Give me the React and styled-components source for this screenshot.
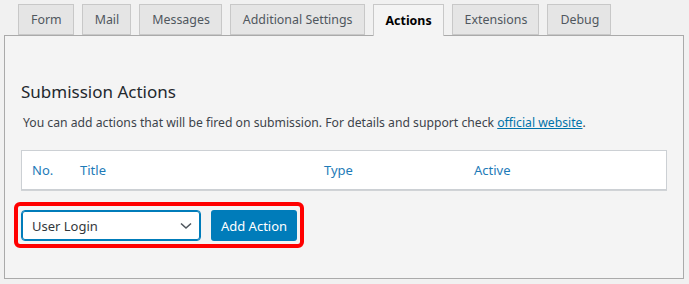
import React from "react";
import styled, { createGlobalStyle } from "styled-components";

const Global = createGlobalStyle`
  html, body { margin: 0; padding: 0; background: #f1f1f1; }
  body { font-family: "Noto Sans", "Open Sans", sans-serif; color: #23282d; }
  * { box-sizing: border-box; }
`;

const Page = styled.div`
  width: 689px;
  height: 284px;
  padding: 4px 5px 0 4px;
`;

const TabBar = styled.div`
  display: flex;
  gap: 8px;
  padding-left: 14px;
  height: 31px;
  position: relative;
  z-index: 1;
`;

const Tab = styled.div`
  height: ${(p) => (p.$active ? "32px" : "31px")};
  padding: 0 11px 0 12px;
  display: flex;
  align-items: center;
  font-size: 12.4px;
  font-weight: ${(p) => (p.$active ? 700 : 400)};
  color: ${(p) => (p.$active ? "#000" : "#50575e")};
  background: ${(p) => (p.$active ? "#f4f4f4" : "#e5e5e5")};
  border: 1px solid #c8c8c8;
  border-bottom: ${(p) => (p.$active ? "none" : "1px solid #c8c8c8")};
`;

const Panel = styled.div`
  border: 1px solid #aaaaaa;
  background: #f4f4f4;
  padding: 44px 16px 28px 16px;
  height: 244px;
`;

const Heading = styled.h2`
  margin: 0;
  font-size: 17px;
  font-weight: 400;
  color: #23282d;
  line-height: 24px;
`;

const Desc = styled.p`
  margin: 10px 0 0 2px;
  font-size: 12.2px;
  line-height: 18px;
  color: #3c434a;
`;

const Link = styled.a`
  color: #0073aa;
  text-decoration: underline;
`;

const Table = styled.div`
  margin-top: 18px;
  background: #fff;
  border: 1px solid #ccd0d4;
  box-shadow: 0 1px 0 #d0d3d6;
  display: grid;
  grid-template-columns: 48px 244px 150px 1fr;
  height: 40px;
  align-items: center;
`;

const HeadCell = styled.div`
  padding: 0 10px;
  font-size: 13px;
  color: #1e7bb8;
`;

const Highlight = styled.div`
  margin: 12px 0 0 -7px;
  display: inline-flex;
  gap: 10px;
  border: 4px solid #ff0000;
  border-radius: 6px;
  padding: 4px 3px 3px 3px;
`;

const Select = styled.div`
  width: 180px;
  height: 31px;
  border: 1px solid #007cba;
  box-shadow: 0 0 0 1px #007cba inset;
  border-radius: 4px;
  background: #fff;
  display: flex;
  align-items: center;
  justify-content: space-between;
  padding: 0 8px 0 10px;
  font-size: 13px;
  color: #32373c;
`;

const Button = styled.button`
  width: 86px;
  height: 31px;
  border: none;
  border-radius: 3px;
  background: #007cba;
  color: #fff;
  font-family: inherit;
  font-size: 13px;
  padding: 0;
`;

const tabs = ["Form", "Mail", "Messages", "Additional Settings", "Actions", "Extensions", "Debug"];

export default function App() {
  return (
    <>
      <Global />
      <Page>
        <TabBar>
          {tabs.map((t) => (
            <Tab key={t} $active={t === "Actions"}>{t}</Tab>
          ))}
        </TabBar>
        <Panel>
          <Heading>Submission Actions</Heading>
          <Desc>
            You can add actions that will be fired on submission. For details and support check{" "}
            <Link href="#">official website</Link>.
          </Desc>
          <Table>
            <HeadCell>No.</HeadCell>
            <HeadCell>Title</HeadCell>
            <HeadCell>Type</HeadCell>
            <HeadCell>Active</HeadCell>
          </Table>
          <Highlight>
            <Select>
              <span>User Login</span>
              <svg width="12" height="8" viewBox="0 0 12 8">
                <path d="M1 1.5 L6 6 L11 1.5" fill="none" stroke="#50575e" strokeWidth="1.6" />
              </svg>
            </Select>
            <Button>Add Action</Button>
          </Highlight>
        </Panel>
      </Page>
    </>
  );
}
